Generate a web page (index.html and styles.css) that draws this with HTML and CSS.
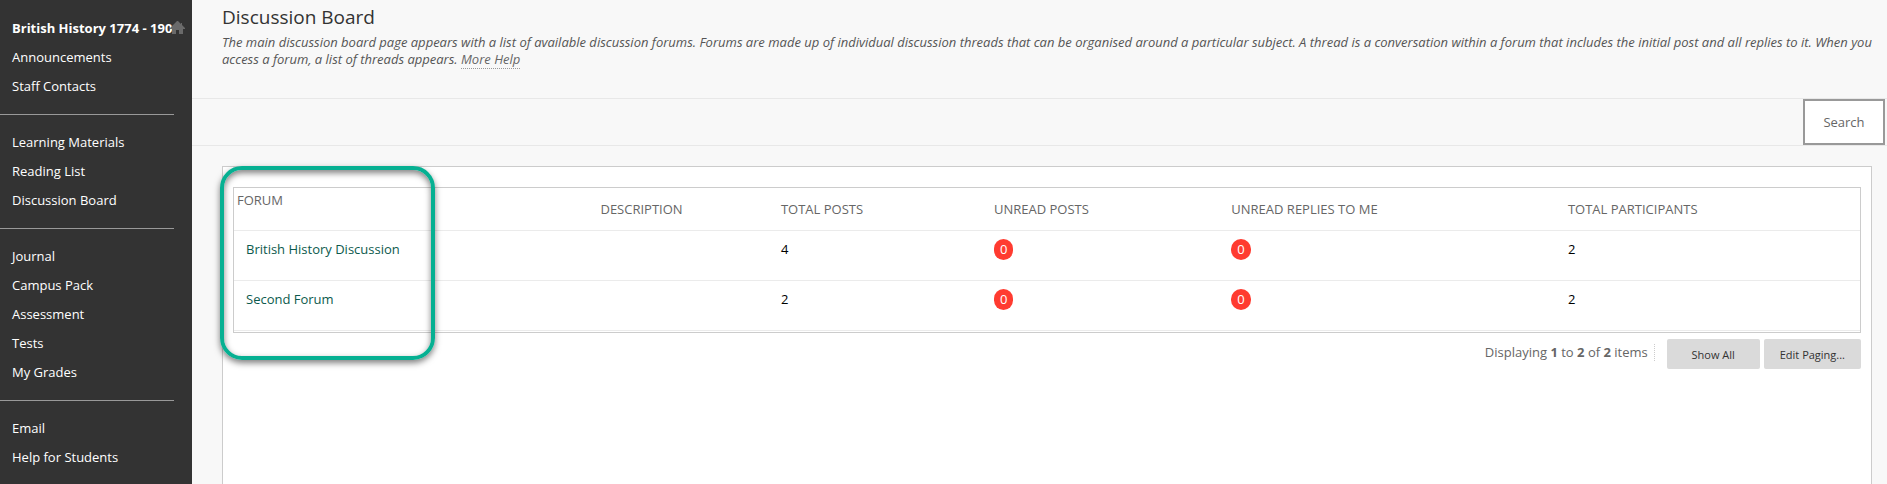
FILE: index.html
```html
<!DOCTYPE html>
<html lang="en">

<head>
    <meta charset="UTF-8">
    <meta name="viewport" content="width=device-width, initial-scale=1.0">
    <title>Discussion Board</title>
    <link rel="stylesheet" href="styles.css">
</head>

<body>
    <div class="page">
        <nav class="sidebar">
            <div class="course">
                <a class="course-title" href="#">British History 1774 - 1901</a>
                <a class="home" href="#" aria-label="Home">
                    <svg width="15" height="13" viewBox="0 0 15 13">
                        <path d="M7 0 H8 L11 3 V2 H12 V4 L15 7 V8 H13 V13 H9 V9 H6 V13 H2 V8 H0 V7 Z" fill="#6a6a6a" />
                    </svg>
                </a>
            </div>
            <a href="#">Announcements</a>
            <a href="#">Staff Contacts</a>
            <hr>
            <a href="#">Learning Materials</a>
            <a href="#">Reading List</a>
            <a href="#">Discussion Board</a>
            <hr>
            <a href="#">Journal</a>
            <a href="#">Campus Pack</a>
            <a href="#">Assessment</a>
            <a href="#">Tests</a>
            <a href="#">My Grades</a>
            <hr>
            <a href="#">Email</a>
            <a href="#">Help for Students</a>
        </nav>

        <main class="content">
            <header class="intro">
                <h1>Discussion Board</h1>
                <p>The main discussion board page appears with a list of available discussion forums. Forums are made up of individual discussion threads that can be organised around a particular subject. A thread is a conversation within a forum that includes the initial post and all replies to it. When you access a forum, a list of threads appears. <a href="#">More Help</a></p>
            </header>

            <div class="toolbar">
                <button class="search" type="button">Search</button>
            </div>

            <section class="panel">
                <div class="highlight"></div>
                <table class="forums">
                    <thead>
                        <tr>
                            <th class="col-forum">Forum</th>
                            <th class="col-desc">Description</th>
                            <th class="col-total">Total Posts</th>
                            <th class="col-unread">Unread Posts</th>
                            <th class="col-replies">Unread Replies To Me</th>
                            <th>Total Participants</th>
                        </tr>
                    </thead>
                    <tbody>
                        <tr>
                            <td><a href="#">British History Discussion</a></td>
                            <td></td>
                            <td>4</td>
                            <td><span class="badge">0</span></td>
                            <td><span class="badge">0</span></td>
                            <td>2</td>
                        </tr>
                        <tr>
                            <td><a href="#">Second Forum</a></td>
                            <td></td>
                            <td>2</td>
                            <td><span class="badge">0</span></td>
                            <td><span class="badge">0</span></td>
                            <td>2</td>
                        </tr>
                    </tbody>
                </table>
                <div class="paging">
                    <span class="count">Displaying <b>1</b> to <b>2</b> of <b>2</b> items</span>
                    <button type="button">Show All</button>
                    <button type="button">Edit Paging...</button>
                </div>
            </section>
        </main>
    </div>
</body>

</html>
```
FILE: styles.css
```css
* {
    box-sizing: border-box;
}

body {
    margin: 0;
    background: #f8f8f8;
    color: #000;
    font-family: "Open Sans", sans-serif;
    font-size: 13px;
    line-height: 17px;
}

button {
    font-family: inherit;
    cursor: pointer;
}

.page {
    display: flex;
    min-height: 100vh;
}

/* left menu */
.sidebar {
    flex: 0 0 192px;
    min-width: 0;
    padding-top: 14px;
    background: #333;
}

.sidebar a {
    display: block;
    padding: 6px 12px;
    color: #fff;
    text-decoration: none;
}

.sidebar hr {
    margin: 13px 18px 13px 0;
    border: 0;
    border-top: 1px solid #999;
}

.course {
    position: relative;
    margin-right: 18px;
}

.sidebar .course-title {
    padding-right: 0;
    overflow: hidden;
    white-space: nowrap;
    font-weight: bold;
}

.sidebar .home {
    position: absolute;
    top: 7px;
    right: -11px;
    padding: 0;
}

.home svg {
    display: block;
}

/* page heading */
.content {
    flex: 1;
    min-width: 0;
}

.intro {
    padding: 4px 8px 30px 30px;
}

.intro h1 {
    margin: 0;
    color: #333;
    font-size: 19px;
    font-weight: normal;
    line-height: 26px;
}

.intro p {
    margin: 4px 0 0;
    color: #555;
    font-style: italic;
}

.intro a {
    border-bottom: 1px dotted #999;
    color: #666;
    text-decoration: none;
}

.toolbar {
    display: flex;
    justify-content: flex-end;
    padding-right: 2px;
    border-top: 1px solid #e8e8e8;
    border-bottom: 1px solid #e8e8e8;
}

.search {
    width: 82px;
    height: 46px;
    border: 2px solid #999;
    background: #fff;
    color: #666;
    font-size: 13px;
}

/* forum list */
.panel {
    position: relative;
    min-height: 318px;
    margin: 20px 15px 0 30px;
    padding: 20px 10px;
    border: 1px solid #ccc;
    border-bottom: 0;
    background: #fff;
}

.highlight {
    position: absolute;
    top: -1px;
    left: -3px;
    width: 215px;
    height: 194px;
    border: 4px solid #06b092;
    border-radius: 22px;
    box-shadow: 0 3px 6px rgba(0, 0, 0, 0.5), inset 0 3px 6px rgba(0, 0, 0, 0.5);
    pointer-events: none;
}

.forums {
    width: 100%;
    padding-bottom: 1px;
    border: 1px solid #ccc;
    border-spacing: 0;
    table-layout: fixed;
}

.forums th,
.forums td {
    padding: 10px 12px;
    border-bottom: 1px solid #ebebeb;
    text-align: left;
}

.forums th {
    height: 43px;
    color: #666;
    font-weight: normal;
    text-transform: uppercase;
}

.forums td {
    height: 50px;
    vertical-align: top;
}

.forums a {
    color: #0c5a4d;
    text-decoration: none;
}

.forums .col-forum {
    width: 21.8%;
    padding: 4px 3px;
    vertical-align: top;
}

.col-desc {
    width: 11.1%;
}

.col-total {
    width: 13.1%;
}

.col-unread {
    width: 14.6%;
}

.col-replies {
    width: 20.7%;
}

.badge {
    display: inline-block;
    margin: -2px 0;
    padding: 2px 6px;
    border-radius: 10px;
    background: #ff3b30;
    color: #fff;
}

.paging {
    display: flex;
    align-items: flex-start;
    justify-content: flex-end;
    gap: 4px;
    margin-top: 6px;
}

.count {
    margin: 5px 8px 0 0;
    padding-right: 6px;
    border-right: 1px dotted #ccc;
    color: #666;
}

.paging button {
    min-width: 93px;
    height: 30px;
    padding: 0 16px;
    border: 0;
    border-radius: 2px;
    background: #dadada;
    color: #333;
    font-size: 11px;
}
```
